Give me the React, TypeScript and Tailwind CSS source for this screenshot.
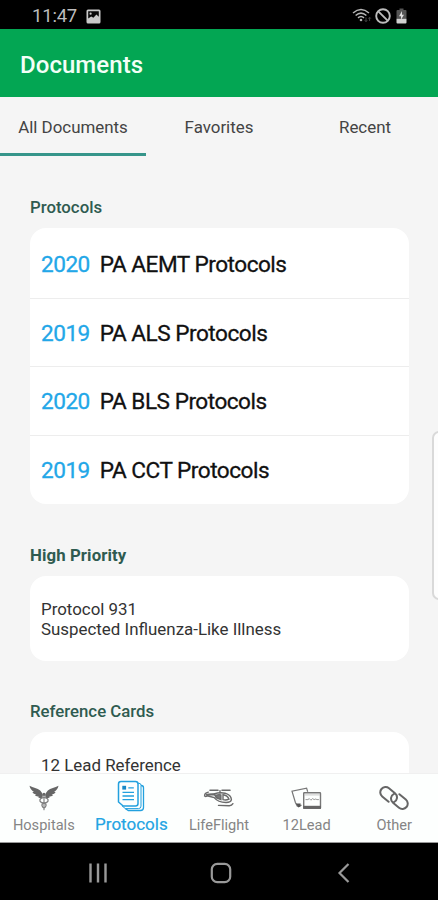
import type { ReactNode } from 'react';
import clsx from 'clsx';

const tabs = ['All Documents', 'Favorites', 'Recent'];

const protocols = [
  { year: '2020', title: 'PA AEMT Protocols' },
  { year: '2019', title: 'PA ALS Protocols' },
  { year: '2020', title: 'PA BLS Protocols' },
  { year: '2019', title: 'PA CCT Protocols' },
];

function ImageIcon() {
  return (
    <svg width="15" height="15" viewBox="0 0 15 15">
      <rect x="0.5" y="0.5" width="14" height="14" rx="1.5" fill="#c9c9c9" />
      <path d="M2.2 2.2h10.6v5.6L10.4 5.6 7.4 8.7 5.2 7.4 2.2 9.4z" fill="#080808" />
      <circle cx="4.6" cy="4.7" r="1.1" fill="#c9c9c9" />
    </svg>
  );
}

function WifiIcon() {
  return (
    <svg width="20" height="16" viewBox="0 0 20 16" fill="none" stroke="#b5b5b5" strokeWidth="1.5">
      <path d="M1 5Q9 -2 17 5" />
      <path d="M3.6 7.5Q9 2.7 14.4 7.5" />
      <path d="M6 9.9Q9 7.2 12 9.9" />
      <circle cx="9" cy="12" r="1.3" fill="#b5b5b5" stroke="none" />
      <path d="M14 9.5v4M12.7 12.2l1.3 1.5 1.2-1.5M17.6 13V9.4M16.4 10.6l1.2-1.4 1.2 1.4" stroke="#444" strokeWidth="1" />
    </svg>
  );
}

function BlockedIcon() {
  return (
    <svg width="16" height="16" viewBox="0 0 16 16" fill="none" stroke="#bcbcbc" strokeWidth="1.9">
      <circle cx="8" cy="8" r="6.8" />
      <path d="M3.3 3.3l9.4 9.4" />
    </svg>
  );
}

function BatteryIcon() {
  return (
    <svg width="11" height="16" viewBox="0 0 11 16">
      <path d="M3.5 0.5h4V2H9.5q1 0 1 1v7H0.5V3q0-1 1-1h2z" fill="#555" />
      <path d="M0.5 10.5h10v4q0 1-1 1h-8q-1 0-1-1z" fill="#d0d0d0" />
      <path d="M6 3L3 8.3h2v3.4l3-5H6z" fill="#ddd" />
    </svg>
  );
}

function HospitalIcon() {
  return (
    <svg width="30" height="26" viewBox="0 0 30 26" fill="#666">
      <path d="M0.5 0.8C4 3 8.5 3.2 11.2 5.6Q13 7.4 13.8 10.4L13.4 13.2Q10.8 13.6 8.9 12L10.3 11.3Q7 11.9 5.8 10L7.4 9.6Q4.3 9.2 3.3 7L5 7Q1.3 4.9 0.5 0.8z" />
      <path d="M29.5 0.8C26 3 21.5 3.2 18.8 5.6Q17 7.4 16.2 10.4L16.6 13.2Q19.2 13.6 21.1 12L19.7 11.3Q23 11.9 24.2 10L22.6 9.6Q25.7 9.2 26.7 7L25 7Q28.7 4.9 29.5 0.8z" />
      <circle cx="15" cy="9.4" r="1.7" />
      <path d="M14.4 10.5h1.2v13.7l-0.6 1.6-0.6-1.6z" fill="#888" />
      <g fill="none" stroke="#808080" strokeWidth="1.3">
        <path d="M15 12.4Q10.2 13.3 11 16.1 12 18 15 18 17.4 18.8 17 20.6 16.6 22.2 15 23" />
        <path d="M15 12.4Q19.8 13.3 19 16.1 18 18 15 18 12.6 18.8 13 20.6 13.4 22.2 15 23" />
      </g>
    </svg>
  );
}

function ProtocolIcon() {
  return (
    <svg width="28" height="32" viewBox="0 0 28 32" fill="none" stroke="#22a0de" strokeWidth="1.5">
      <path d="M4 1.5h14.5q2.5 0 2.5 2.5v19.5q0 2.5-2.5 2.5H6.2L1.5 22V4Q1.5 1.5 4 1.5z" />
      <path d="M21 3.3h1q2 0 2 2v20.8q0 2.5-2.5 2.5H8.3L5 25.8" strokeWidth="1" />
      <path d="M24 5.5h0.3q2.2 0 2.2 2.2v19.8q0 3-3 3H11.3l-3-2" strokeWidth="1.3" />
      <rect x="5.3" y="5.8" width="3.8" height="3.8" fill="#1688c7" stroke="none" />
      <path d="M11.3 7.8h5.5M5.5 12.4h11.5M5.5 16h11.5M5.5 19.6h11.5" strokeWidth="1.3" />
    </svg>
  );
}

function HelicopterIcon() {
  return (
    <svg width="31" height="20" viewBox="0 0 31 20" fill="none" stroke="#6a6a6a" strokeWidth="1.4" strokeLinecap="round">
      <path d="M7 2.2h8M19 2.2h8" strokeWidth="1.6" />
      <path d="M17 2.6v2.4" />
      <path d="M5.3 4.1Q1.4 4.9 1.6 8q1.6 1.1 3-0.8" />
      <path d="M3.6 6.4L11 5.9Q17 3.9 22 5.2 28.2 7.2 28.4 11.6 28 14.4 23 14.5 15 14.3 11.2 9.6L4.4 7.8z" />
      <path d="M5 6.8l6.3-.5 2.5 3.4" strokeWidth="1.8" />
      <path d="M13 7.2q2.8-1 4.9-.3v4.6q-3.5-.9-5.2-2.8z" fill="#777" />
      <path d="M20 6.8q4.6.6 6 4.4-3.2 1.4-6 .4z" />
      <path d="M15.5 17.4l10.8.3q2.5 0 3.6-2" />
    </svg>
  );
}

function LeadIcon() {
  return (
    <svg width="31" height="23" viewBox="0 0 31 23" fill="none" stroke="#777" strokeWidth="1.4">
      <path d="M16.7 4.7L15.6 1.1 1 4.2l3.4 11.3 1.9 3.6h2.4l1.8-1.2" strokeWidth="1.2" />
      <path d="M4.8 16.5l4.9.1-.4 2.8-1.9 1z" fill="#555" stroke="none" />
      <rect x="12.7" y="5.8" width="16.8" height="15.6" rx="0.6" />
      <path d="M12.2 20.3h17.8" stroke="#666" strokeWidth="3" />
      <path d="M14.5 12.6h2.4l1.4-1 1.6 1.6 1.7-1.6 1.5 1 1.7-.6 1.1.6h2" stroke="#999" strokeWidth="1" />
      <path d="M13 7.9h16" stroke="#bbb" strokeWidth="0.8" />
    </svg>
  );
}

function LinkIcon() {
  return (
    <svg width="30" height="24" viewBox="0 0 30 24" fill="none" stroke="#666" strokeWidth="2" strokeLinecap="round">
      <path d="M9.6 15.8L3.2 10.5A5.3 5.3 0 0 1 10 2.3L16 7.3A5.3 5.3 0 0 1 15 16.2" />
      <path d="M20.4 8.2L26.8 13.5A5.3 5.3 0 0 1 20 21.7L14 16.7A5.3 5.3 0 0 1 15 7.8" />
    </svg>
  );
}

const navItems: { label: string; icon: ReactNode; active?: boolean }[] = [
  { label: 'Hospitals', icon: <HospitalIcon /> },
  { label: 'Protocols', icon: <ProtocolIcon />, active: true },
  { label: 'LifeFlight', icon: <HelicopterIcon /> },
  { label: '12Lead', icon: <LeadIcon /> },
  { label: 'Other', icon: <LinkIcon /> },
];

function StatusBar() {
  return (
    <div className="flex h-[29px] shrink-0 items-center justify-between bg-black pt-[3px] pr-[31px] pl-8">
      <div className="flex items-center gap-[9px]">
        <span className="text-[18.5px] leading-none tracking-[-0.2px] text-[#bdbdbd]">11:47</span>
        <ImageIcon />
      </div>
      <div className="flex items-center gap-[3px]">
        <WifiIcon />
        <BlockedIcon />
        <span className="ml-[2px]">
          <BatteryIcon />
        </span>
      </div>
    </div>
  );
}

function SectionTitle({ children, className }: { children: ReactNode; className?: string }) {
  return <h2 className={clsx('h-5 text-[16.8px] leading-5 text-[#2f5b50]', className ?? 'font-medium')}>{children}</h2>;
}

export default function App() {
  return (
    <div className="flex h-[900px] w-[438px] flex-col overflow-hidden bg-[#f5f5f5] font-['Roboto',sans-serif]">
      <StatusBar />
      <header className="flex h-[68px] shrink-0 items-center bg-[#03a653] pt-1 pl-5">
        <h1 className="text-2xl font-medium tracking-[0.05px] text-[#f2fff7]">Documents</h1>
      </header>

      <div className="relative flex min-h-0 flex-1 flex-col overflow-hidden">
        <div className="grid h-[59px] shrink-0 grid-cols-3">
          {tabs.map((tab, index) => (
            <div
              key={tab}
              className={clsx(
                'flex items-center justify-center border-b-[3px] pt-[6px] text-[16.9px] text-[#444]',
                index === 0 ? 'border-[#36958a]' : 'border-transparent',
              )}
            >
              {tab}
            </div>
          ))}
        </div>

        <main className="flex flex-col pr-[29px] pl-[30px]">
          <section className="pt-[41px]">
            <SectionTitle>Protocols</SectionTitle>
            <ul className="mt-[11px] h-[276px] overflow-hidden rounded-2xl bg-white">
              {protocols.map((item) => (
                <li
                  key={item.title}
                  className="flex h-[68.5px] items-center gap-[10px] border-b border-[#ededed] pt-[3px] pl-[11px] text-[22.6px] tracking-[-0.5px] first:h-[70.5px] first:pt-1 last:border-0"
                >
                  <span className="text-[#23a7e8] [-webkit-text-stroke:0.3px]">{item.year}</span>
                  <span className="text-[#111] [-webkit-text-stroke:0.3px]">{item.title}</span>
                </li>
              ))}
            </ul>
          </section>

          <section className="pt-[41px]">
            <SectionTitle className="font-bold tracking-[0.1px]">High Priority</SectionTitle>
            <div className="mt-[11px] h-[85px] rounded-2xl bg-white pt-[23px] pl-[11px] text-[16.9px] leading-5 text-[#333]">
              <p>Protocol 931</p>
              <p>Suspected Influenza-Like Illness</p>
            </div>
          </section>

          <section className="pt-10">
            <SectionTitle>Reference Cards</SectionTitle>
            <div className="mt-[11px] h-[85px] rounded-2xl bg-white pt-[23px] pl-[11px] text-[16.9px] leading-5 text-[#333]">
              <p>12 Lead Reference</p>
            </div>
          </section>
        </main>

        {/* edge panel handle floats over the list */}
        <div className="absolute top-[334px] -right-2 h-[169px] w-[14px] rounded-lg border-2 border-[#d9d9d9] bg-[#fdfdfd]" />
      </div>

      <nav className="grid h-[70px] shrink-0 grid-cols-5 border-t border-b border-t-[#f0f0f0] border-b-[#999] bg-[#fdfffe]">
        {navItems.map((item) => (
          <div key={item.label} className="flex flex-col items-center">
            <div className={clsx('flex items-center justify-center', item.active ? 'h-[44px]' : 'h-[48px]')}>{item.icon}</div>
            <span
              className={clsx(
                'whitespace-nowrap',
                item.active ? 'mt-[-4px] text-[17px] leading-5 text-[#23a4e3] [-webkit-text-stroke:0.2px]' : 'mt-[-6px] text-[14.6px] leading-[19px] text-[#858585]',
              )}
            >
              {item.label}
            </span>
          </div>
        ))}
      </nav>

      <div className="flex h-[57px] shrink-0 items-center bg-black pt-[3px] pl-[88px]">
        <svg width="20" height="20" viewBox="0 0 20 20" stroke="#999" strokeWidth="2.4">
          <path d="M2.5 0.5v19M10 0.5v19M17.5 0.5v19" />
        </svg>
        <svg className="ml-[102px]" width="22" height="22" viewBox="0 0 22 22" fill="none" stroke="#999" strokeWidth="2.2">
          <rect x="1.8" y="1.8" width="18.4" height="18.4" rx="5.5" />
        </svg>
        <svg className="ml-[105px]" width="14" height="20" viewBox="0 0 14 20" fill="none" stroke="#999" strokeWidth="2.2">
          <path d="M11.5 1L2.5 10l9 9" />
        </svg>
      </div>
    </div>
  );
}
